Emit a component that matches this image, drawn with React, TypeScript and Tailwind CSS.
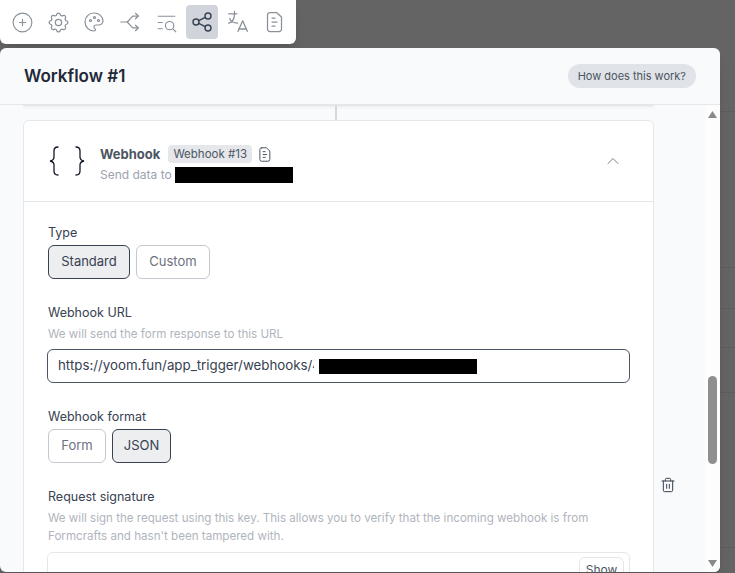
import { ChevronUp, Trash2 } from "lucide-react";
import {
  TbCirclePlus,
  TbSettings,
  TbPalette,
  TbListSearch,
  TbShare,
  TbLanguage,
} from "react-icons/tb";

function SplitIcon({ size = 22 }: { size?: number }) {
  return (
    <svg width={size} height={size} viewBox="0 0 24 24" fill="none" stroke="currentColor" strokeWidth={1.3} strokeLinecap="round" strokeLinejoin="round">
      <path d="M2 12h7l6-6.500h6" />
      <path d="M9 12l6 6.500h6" />
      <path d="M18 2.500l3 3-3 3" />
      <path d="M18 15.500l3 3-3 3" />
    </svg>
  );
}

function FileIcon({ size = 24, width = 1.25 }: { size?: number; width?: number }) {
  return (
    <svg width={size} height={size} viewBox="0 0 24 24" fill="none" stroke="currentColor" strokeWidth={width} strokeLinecap="round" strokeLinejoin="round">
      <path d="M8 2.500h6.500L19.500 7v12a2.500 2.500 0 0 1-2.500 2.500H8A2.500 2.500 0 0 1 5.500 19V5A2.500 2.500 0 0 1 8 2.500z" />
      <path d="M10 8h3M10 12h5M10 16h3" />
    </svg>
  );
}

function Braces() {
  return (
    <svg width="38" height="32" viewBox="0 0 38 32" fill="none" stroke="#111827" strokeWidth={1.3} strokeLinecap="round">
      <path d="M10 2C6.500 2 6 3.500 6 6v6c0 2-1 3.500-4 4 3 .5 4 2 4 4v6c0 2.500.5 4 4 4" />
      <path d="M28 2c3.500 0 4 1.500 4 4v6c0 2 1 3.500 4 4-3 .5-4 2-4 4v6c0 2.500-.5 4-4 4" />
    </svg>
  );
}

const tools = [
  <TbCirclePlus size={25} strokeWidth={1.1} />,
  <TbSettings size={25} strokeWidth={1.2} />,
  <TbPalette size={24} strokeWidth={1.2} />,
  <SplitIcon />,
  <TbListSearch size={25} strokeWidth={1.1} />,
  <TbShare size={24} strokeWidth={1.4} />,
  <TbLanguage size={28} strokeWidth={1.1} />,
  <FileIcon />,
];

function Option({ label, active, width }: { label: string; active?: boolean; width: string }) {
  return (
    <div
      className={
        (active
          ? "flex h-[34px] items-center justify-center rounded-md border border-[#374151] bg-[#eceef0] text-[13px] text-[#374151] "
          : "flex h-[34px] items-center justify-center rounded-md border border-[#c4c8cf] bg-white text-[13px] text-[#6b7280] ") + width
      }
    >
      {label}
    </div>
  );
}

export default function App() {
  return (
    <div className="relative h-[573px] w-[735px] overflow-hidden bg-[#646464] font-['Inter',sans-serif]">
      {/* page behind the overlay */}
      <div className="absolute inset-0 flex flex-col">
        <div className="h-[112px] border-b border-[#5c5c5c]" />
        <div className="h-[156px] border-b border-[#5c5c5c]" />
        <div className="h-[41px] border-b border-[#5c5c5c]" />
        <div className="h-[39px] border-b border-[#5c5c5c]" />
        <div className="h-[45px] border-b border-[#5c5c5c]" />
        <div className="h-[155px] border-b border-[#5c5c5c]" />
      </div>

      <div className="relative flex flex-col">
        <div className="flex h-[44px] w-[296px] items-center gap-1 rounded-b-md bg-white px-1.5 shadow-lg">
          {tools.map((icon, i) => (
            <div
              key={i}
              className={
                i === 5
                  ? "flex h-[34px] w-8 items-center justify-center rounded-sm bg-[#d1d5db] text-[#374151]"
                  : "flex h-[34px] w-8 items-center justify-center text-[#8a9099]"
              }
            >
              {icon}
            </div>
          ))}
        </div>

        <div className="mt-1 flex h-[524px] w-[720px] flex-col overflow-hidden rounded-md bg-[#f9fafb] shadow-lg">
          <div className="flex h-[57px] shrink-0 items-center justify-between border-b border-[#e5e7eb] px-6">
            <div className="pt-[2px] text-[17px] font-semibold text-[#1f2937]">Workflow #1</div>
            <div className="flex h-6 items-center rounded-full bg-[#e0e3e7] px-[10px] text-[11px] text-[#4b5563]">
              How does this work?
            </div>
          </div>

          <div className="flex min-h-0 flex-1">
            <div className="flex w-[705px] overflow-hidden">
              <div className="ml-[23px] flex w-[631px] shrink-0 flex-col">
                <div className="h-px shrink-0 bg-[#e2e4e8] shadow-sm" />
                <div className="ml-[312px] h-[14px] w-[2px] shrink-0 bg-[#d5d7de]" />
                <div className="shrink-0 rounded-md border border-[#e5e7eb] bg-white">
                  <div className="flex h-[81px] items-center border-b border-[#e5e7eb] pl-6 pr-[30px]">
                    <Braces />
                    <div className="ml-[14px] flex flex-col pt-2">
                      <div className="flex h-[18px] items-center">
                        <span className="pt-[2px] text-[13px] font-bold text-[#4b5563]">Webhook</span>
                        <span className="ml-[8px] flex h-[18px] items-center rounded-sm bg-[#e5e7eb] px-[5px] pt-[2px] text-[11.500px] text-[#4b5563]">
                          Webhook #13
                        </span>
                        <span className="ml-[4px] text-[#4b5563]">
                          <FileIcon size={17} width={1.400} />
                        </span>
                      </div>
                      <div className="mt-[2px] flex h-[20px] items-center text-[12px] text-[#9ca3af]">
                        Send data to
                        <span className="ml-[3px] h-4 w-[118px] bg-black" />
                      </div>
                    </div>
                    <ChevronUp size={20} strokeWidth={1.1} className="ml-auto text-[#6b7280]" />
                  </div>

                  <div className="flex h-[500px] flex-col px-6 pt-[22px]">
                    <div className="text-[12.500px] leading-[18px] text-[#374151]">Type</div>
                    <div className="mt-[3px] flex gap-1.5">
                      <Option label="Standard" active width="w-[82px]" />
                      <Option label="Custom" width="w-[74px]" />
                    </div>

                    <div className="mt-[25px] text-[12.500px] leading-[18px] text-[#374151]">Webhook URL</div>
                    <div className="mt-[3px] text-[11.600px] leading-[18px] text-[#b0b5bd]">
                      We will send the form response to this URL
                    </div>
                    <div className="-ml-px mt-[6px] flex h-[34px] w-[583px] items-center rounded-md border border-[#4b5563] pl-[10px] text-[13.300px] text-[#374151]">
                      <span className="w-[256px] overflow-hidden whitespace-nowrap">
                        https://yoom.fun/app_trigger/webhooks/4
                      </span>
                      <span className="ml-[5px] h-[15px] w-[158px] bg-black" />
                    </div>

                    <div className="mt-[25px] text-[12.500px] leading-[18px] text-[#374151]">Webhook format</div>
                    <div className="mt-[3px] flex gap-1.5">
                      <Option label="Form" width="w-[58px]" />
                      <Option label="JSON" active width="w-[59px]" />
                    </div>

                    <div className="mt-[25px] text-[12.500px] leading-[18px] text-[#374151]">Request signature</div>
                    <div className="mt-[3px] w-[580px] text-[11.600px] leading-[18px] text-[#b0b5bd]">
                      We will sign the request using this key. This allows you to verify that the incoming webhook is from Formcrafts and hasn't been tampered with.
                    </div>
                    <div className="-ml-px mt-[7px] flex h-[34px] w-[583px] justify-end rounded-md border border-[#e5e7eb] pr-[5px] pt-[4px]">
                      <div className="flex h-[26px] w-[45px] items-center justify-center rounded-md border border-[#e5e7eb] text-[12px] text-[#4b5563]">
                        Show
                      </div>
                    </div>
                  </div>
                </div>
              </div>
              <div className="flex flex-1 flex-col items-center pr-[24px] pt-[372px] text-[#374151]">
                <Trash2 size={16} strokeWidth={1.5} />
              </div>
            </div>

            {/* scrollbar */}
            <div className="flex w-[15px] flex-col items-center bg-[#fdfdfd] pb-[5px] pt-[6px]">
              <svg width="9" height="7" viewBox="0 0 9 7"><path d="M4.500 0L9 7H0z" fill="#8a8a8a" /></svg>
              <div className="mt-[258px] h-[88px] w-[9px] rounded-full bg-[#8f8f8f]" />
              <svg className="mt-auto" width="9" height="7" viewBox="0 0 9 7"><path d="M0 0h9L4.500 7z" fill="#8a8a8a" /></svg>
            </div>
          </div>
        </div>
      </div>
    </div>
  );
}
